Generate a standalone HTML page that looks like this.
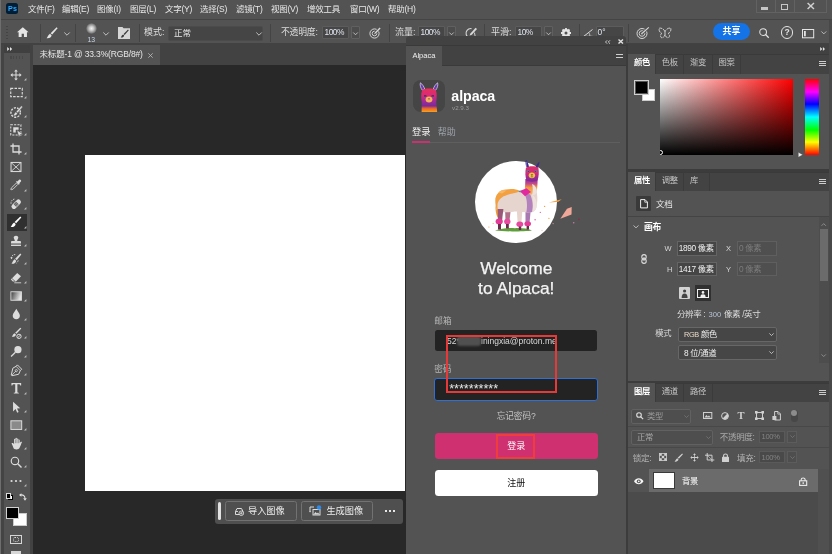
<!DOCTYPE html>
<html lang="zh-CN">
<head>
<meta charset="utf-8">
<title>Photoshop - Alpaca</title>
<style>
*{box-sizing:border-box;margin:0;padding:0}
html,body{width:832px;height:554px;overflow:hidden;background:#535353;}
body{position:relative;font-family:"Liberation Sans","Noto Sans CJK SC",sans-serif;font-size:9px;color:#dddddd;line-height:1;}
#wrap{position:absolute;left:0;top:0;width:832px;height:554px;will-change:transform;}
.a{position:absolute;}
.t{position:absolute;white-space:nowrap;}
svg{position:absolute;overflow:visible}
/* menu */
#menubar{left:0;top:0;width:832px;height:19px;background:#535353;}
#menubar .m{top:4.5px;font-size:8.5px;color:#e8e8e8;letter-spacing:-0.25px}
#optbar{left:0;top:19px;width:832px;height:26px;background:#535353;border-top:1px solid #444;}

.sep{top:4px;width:1px;height:18px;background:#444444;}
.dd{background:#464646;border:1px solid #676767;border-radius:2px;}
.ib{background:#464646;border:1px solid #5c5c5c;border-radius:1px;}
.db{background:#4c4c4c;border:1px solid #606060;border-radius:1px;}
.tbtn{border:1px solid #727272;border-radius:2.5px;background:#4f4f4f;}
/* doc area */
#docstrip{left:0;top:43.3px;width:832px;height:21.7px;background:#424242;}
#canvas{left:33px;top:65px;width:372.75px;height:489px;background:#282828;}
#toolbar{left:0;top:45px;width:30px;height:509px;background:#535353;}
#tbgap{left:30px;top:44px;width:3px;height:510px;background:#424242;}
#alpaca{left:405.75px;top:36.3px;width:220.5px;height:518px;background:#535353;border-radius:3px 3px 0 0;overflow:hidden;}
#right{left:627.75px;top:44px;width:204.25px;height:510px;background:#535353;overflow:hidden;}
#rgap{left:626.25px;top:44px;width:1.5px;height:510px;background:#3c3c3c;}
</style>
</head>
<body>
<div id="wrap">
<div class="a" style="left:0;top:0;width:1px;height:554px;background:#6e6e6e;z-index:5"></div>
<div class="a" style="left:829.4px;top:19.5px;width:2.6px;height:535px;background:#484848;z-index:5"></div>
<!-- MENU BAR -->
<div id="menubar" class="a">
<div class="a" style="left:6px;top:3px;width:12px;height:11px;background:#001e36;border-radius:2.5px;"></div>
<div class="t" style="left:8px;top:4.5px;font-size:7.2px;font-weight:bold;color:#31a8ff;letter-spacing:0.3px;">Ps</div>
<div class="t m" style="left:28px">文件(F)</div>
<div class="t m" style="left:62px">编辑(E)</div>
<div class="t m" style="left:97px">图像(I)</div>
<div class="t m" style="left:130px">图层(L)</div>
<div class="t m" style="left:165px">文字(Y)</div>
<div class="t m" style="left:200px">选择(S)</div>
<div class="t m" style="left:236px">滤镜(T)</div>
<div class="t m" style="left:271px">视图(V)</div>
<div class="t m" style="left:307px">增效工具</div>
<div class="t m" style="left:350px">窗口(W)</div>
<div class="t m" style="left:388px">帮助(H)</div>
<!-- window controls -->
<div class="a" style="left:755.8px;top:-1px;width:71.7px;height:14px;border:1px solid #626262;border-top:none;"></div>
<div class="a" style="left:774.8px;top:0;width:1px;height:12.5px;background:#626262;"></div>
<div class="a" style="left:793.9px;top:0;width:1px;height:12.5px;background:#626262;"></div>
<div class="a" style="left:761.2px;top:7.2px;width:7px;height:2.4px;background:#c6c6c6;"></div>
<div class="a" style="left:781.2px;top:4.1px;width:6.8px;height:5.6px;border:1.5px solid #c6c6c6;"></div>
<svg style="left:807.2px;top:3.2px" width="7.6" height="6" viewBox="0 0 7.6 6"><path d="M0.6 0 L7 6 M7 0 L0.6 6" stroke="#d0d0d0" stroke-width="1.5" fill="none"/></svg>
</div>
<!-- OPTIONS BAR -->
<div id="optbar" class="a">
<!-- coordinates relative to optbar top=19 -->
<div class="a" style="left:6px;top:6px;width:1.5px;height:15px;background:repeating-linear-gradient(#444 0 1.5px,transparent 1.5px 3px);"></div>
<svg style="left:17px;top:7.3px" width="11.6" height="10.2" viewBox="0 0 12 10"><path d="M6 0 L12 5.2 L10.3 5.2 L10.3 10 L7.2 10 L7.2 6.6 L4.8 6.6 L4.8 10 L1.7 10 L1.7 5.2 L0 5.2 Z" fill="#e4e4e4"/></svg>
<div class="a sep" style="left:40px"></div>
<svg style="left:46px;top:7px" width="12" height="12" viewBox="0 0 12 12"><path d="M10.6 0.3 L11.6 1.2 L6.2 7.6 L4.6 6.2 Z" fill="#e4e4e4"/><path d="M4 6.8 L5.6 8.2 C5.4 10.2 3.4 11.6 0.6 11.2 C1.8 10.4 1.6 8.2 4 6.8 Z" fill="#e4e4e4"/></svg>
<svg style="left:64px;top:12px" width="6" height="4" viewBox="0 0 6 4"><path d="M0.3 0.5 L3 3.2 L5.7 0.5" stroke="#cfcfcf" stroke-width="0.9" fill="none"/></svg>
<div class="a sep" style="left:75px"></div>
<div class="a" style="left:85.5px;top:3px;width:11px;height:11px;border-radius:50%;background:radial-gradient(circle,#f0f0f0 0%,#cfcfcf 25%,#8a8a8a 55%,#535353 72%);"></div>
<div class="t" style="left:87.6px;top:16.6px;font-size:6.8px;color:#c8d4e8;">13</div>
<svg style="left:103px;top:12px" width="6" height="4" viewBox="0 0 6 4"><path d="M0.3 0.5 L3 3.2 L5.7 0.5" stroke="#cfcfcf" stroke-width="0.9" fill="none"/></svg>
<svg style="left:118px;top:7px" width="12" height="12" viewBox="0 0 12 12"><path d="M0 0 L4.5 0 L5.5 1.2 L12 1.2 L12 12 L0 12 Z" fill="#d6d6d6"/><path d="M10 2.6 L10.8 3.3 L6.6 8 L5.6 7.1 Z" fill="#3a3a3a"/><path d="M5.1 7.5 L6.2 8.5 C6 9.9 4.6 10.8 2.6 10.5 C3.5 9.9 3.4 8.4 5.1 7.5 Z" fill="#3a3a3a"/></svg>
<div class="a sep" style="left:138.5px"></div>
<div class="t" style="left:144px;top:8px;font-size:9px;color:#dcdcdc;">模式:</div>
<div class="a" style="left:167.6px;top:5.7px;width:95.4px;height:15.2px;background:#454545;border:1px solid #4b4b4b;border-radius:2px;"></div>
<div class="t" style="left:174px;top:9px;font-size:8.5px;color:#e8e8e8;">正常</div>
<svg style="left:256px;top:12px" width="6" height="4" viewBox="0 0 6 4"><path d="M0.3 0.5 L3 3.2 L5.7 0.5" stroke="#cfcfcf" stroke-width="0.9" fill="none"/></svg>
<div class="a sep" style="left:270px"></div>
<div class="t" style="left:281px;top:8px;font-size:8.8px;letter-spacing:-0.2px;color:#dcdcdc;">不透明度:</div>
<div class="a ib" style="left:322.3px;top:5.7px;width:26.7px;height:13px;"></div>
<div class="t" style="left:324.5px;top:7.9px;font-size:8.4px;color:#dfe4ee;letter-spacing:-0.5px">100%</div>
<div class="a db" style="left:350.6px;top:5.7px;width:9.8px;height:13px;"></div>
<svg style="left:352.5px;top:11.5px" width="5" height="3.5" viewBox="0 0 6 4"><path d="M0.3 0.5 L3 3.2 L5.7 0.5" stroke="#cfcfcf" stroke-width="1" fill="none"/></svg>
<svg style="left:369px;top:7px" width="12" height="12" viewBox="0 0 12 12"><circle cx="5.5" cy="6.5" r="4.6" stroke="#d8d8d8" stroke-width="1" fill="none"/><circle cx="5.5" cy="6.5" r="2.3" stroke="#d8d8d8" stroke-width="0.9" fill="none"/><path d="M5 7.2 L11 0.8" stroke="#535353" stroke-width="2.6"/><path d="M5 7.2 L6 5.2 L10.6 0.6 L11.6 1.6 L7 6.2 Z" fill="#d8d8d8"/></svg>
<div class="a sep" style="left:388.5px"></div>
<div class="t" style="left:395px;top:8px;font-size:9px;color:#dcdcdc;">流量:</div>
<div class="a ib" style="left:418.3px;top:5.7px;width:26.7px;height:13px;"></div>
<div class="t" style="left:420.5px;top:7.9px;font-size:8.4px;color:#dfe4ee;letter-spacing:-0.5px">100%</div>
<div class="a db" style="left:446.6px;top:5.7px;width:9.8px;height:13px;"></div>
<svg style="left:448.5px;top:11.5px" width="5" height="3.5" viewBox="0 0 6 4"><path d="M0.3 0.5 L3 3.2 L5.7 0.5" stroke="#cfcfcf" stroke-width="1" fill="none"/></svg>
<svg style="left:465px;top:7px" width="13" height="12" viewBox="0 0 13 12"><path d="M6.5 1.6 C2.5 1.2 0.4 4.6 1.2 7.6 C1.8 9.6 3.6 10.8 5.4 10.6" stroke="#d8d8d8" stroke-width="1.1" fill="none"/><path d="M4.6 8.6 L5.4 6.6 L10.6 0.8 L12 2 L6.8 7.8 Z" fill="#d8d8d8"/><path d="M9.4 5.6 L10.4 10.4" stroke="#d8d8d8" stroke-width="0.9"/></svg>
<div class="a sep" style="left:484px"></div>
<div class="t" style="left:491px;top:8px;font-size:9px;color:#dcdcdc;">平滑:</div>
<div class="a ib" style="left:515.3px;top:5.7px;width:26.7px;height:13px;"></div>
<div class="t" style="left:517.5px;top:7.9px;font-size:8.4px;color:#dfe4ee;letter-spacing:-0.5px">10%</div>
<div class="a db" style="left:543.6px;top:5.7px;width:9.8px;height:13px;"></div>
<svg style="left:545.5px;top:11.5px" width="5" height="3.5" viewBox="0 0 6 4"><path d="M0.3 0.5 L3 3.2 L5.7 0.5" stroke="#cfcfcf" stroke-width="1" fill="none"/></svg>
<svg style="left:561px;top:8px" width="10" height="10" viewBox="0 0 10 10"><circle cx="5" cy="5" r="3" fill="none" stroke="#e4e4e4" stroke-width="2"/><g stroke="#e4e4e4" stroke-width="1.8"><path d="M5 0 V10 M0 5 H10 M1.5 1.5 L8.5 8.5 M8.5 1.5 L1.5 8.5"/></g><circle cx="5" cy="5" r="1.5" fill="#535353"/></svg>
<div class="a sep" style="left:578.5px"></div>
<svg style="left:583px;top:9px" width="10" height="8" viewBox="0 0 10 8"><path d="M9.5 0.5 L0.8 7.3 L9.5 7.3" stroke="#d8d8d8" stroke-width="1" fill="none"/><path d="M5.6 3.6 C6.6 4.6 6.9 5.8 6.8 7.3" stroke="#d8d8d8" stroke-width="0.8" fill="none"/></svg>
<div class="a ib" style="left:595.7px;top:5.7px;width:28.3px;height:13px;"></div>
<div class="a sep" style="left:628px"></div>
<div class="t" style="left:597.5px;top:7.9px;font-size:8.4px;color:#dfe4ee;">0°</div>
<!-- right side -->
<svg style="left:636px;top:7px" width="14" height="12" viewBox="0 0 14 12"><circle cx="6" cy="6.5" r="5" stroke="#d8d8d8" stroke-width="1" fill="none"/><circle cx="6" cy="6.5" r="2.8" stroke="#d8d8d8" stroke-width="0.9" fill="none"/><circle cx="6" cy="6.5" r="0.9" fill="#d8d8d8"/><path d="M6 6.5 L12.6 0.6" stroke="#535353" stroke-width="2.8"/><path d="M6 6.5 L12.8 0.4" stroke="#d8d8d8" stroke-width="1.1"/></svg>
<svg style="left:658px;top:7px" width="14" height="13" viewBox="0 0 14 13"><path d="M7 4.6 C6 2.2 3.4 0.6 1.2 1.2 C0.6 3.6 2 5.8 3.8 6.4 C2.2 7.4 2 9.6 3.6 10.8 C5.4 10.8 6.6 9.4 7 7.8 C7.4 9.4 8.6 10.8 10.4 10.8 C12 9.6 11.8 7.4 10.2 6.4 C12 5.8 13.4 3.6 12.8 1.2 C10.6 0.6 8 2.2 7 4.6 Z" stroke="#d8d8d8" stroke-width="0.9" fill="none" stroke-dasharray="3.2 0.8"/><path d="M7 4.4 V8.4" stroke="#d8d8d8" stroke-width="0.9"/></svg>
<div class="a" style="left:713px;top:3.4px;width:37.3px;height:17px;border-radius:9px;background:#1473e6;"></div>
<div class="t" style="left:722.5px;top:7.4px;font-size:9px;font-weight:bold;color:#ffffff;">共享</div>
<svg style="left:759px;top:7.6px" width="10.3" height="10.3" viewBox="0 0 11 11"><circle cx="4.4" cy="4.4" r="3.6" stroke="#e4e4e4" stroke-width="1.1" fill="none"/><path d="M7 7 L10.4 10.4" stroke="#e4e4e4" stroke-width="1.3"/></svg>
<div class="a" style="left:780.7px;top:6.4px;width:12.4px;height:12.4px;border-radius:50%;border:1.1px solid #e4e4e4;"></div>
<div class="t" style="left:784.5px;top:8.4px;font-size:8.5px;font-weight:bold;color:#e4e4e4;">?</div>
<svg style="left:802px;top:8.6px" width="12.2" height="9.3" viewBox="0 0 12.2 9.3"><rect x="0.5" y="0.5" width="11.2" height="8.3" stroke="#e4e4e4" stroke-width="1" fill="none"/><rect x="2" y="2" width="1.8" height="5.3" fill="#e4e4e4"/></svg>
<svg style="left:820.7px;top:11.4px" width="5.6" height="3.6" viewBox="0 0 6 4"><path d="M0.3 0.5 L3 3.2 L5.7 0.5" stroke="#cfcfcf" stroke-width="0.9" fill="none"/></svg>
</div>
<!-- DOC STRIP -->
<div id="docstrip" class="a">
<div class="a" style="left:32.8px;top:1.3px;width:127.7px;height:20.6px;background:#535353;"></div>
<div class="t" style="left:39.5px;top:7.2px;font-size:8.5px;color:#e6e6e6;letter-spacing:-0.15px;">未标题-1 @ 33.3%(RGB/8#)</div>
<svg style="left:148px;top:9.7px" width="5" height="5" viewBox="0 0 5 5"><path d="M0.3 0.3 L4.7 4.7 M4.7 0.3 L0.3 4.7" stroke="#bdbdbd" stroke-width="0.8"/></svg>
</div>
<!-- CANVAS -->
<div id="canvas" class="a">
<div class="a" style="left:52px;top:90px;width:320.2px;height:336.2px;background:#ffffff;"></div>
<div class="a" style="left:182px;top:433.7px;width:188px;height:25px;background:#4f4f4f;border-radius:3px;"></div>
<div class="a" style="left:184.6px;top:437px;width:3.2px;height:18.2px;background:#e2e2e2;border-radius:1.6px;"></div>
<div class="a tbtn" style="left:192.2px;top:436.3px;width:71.6px;height:19.6px;"></div>
<div class="a tbtn" style="left:268.2px;top:436.3px;width:71.6px;height:19.6px;"></div>
<svg style="left:200.5px;top:441.5px" width="10.5" height="9" viewBox="0 0 21 18"><path d="M3 9 L6 3 H15 L18 9 V15 H3 Z" fill="none" stroke="#dcdcdc" stroke-width="2"/><circle cx="14.5" cy="12.5" r="4.5" fill="#4f4f4f" stroke="#dcdcdc" stroke-width="1.8"/><path d="M14.5 10 V15 M12 12.5 H17" stroke="#dcdcdc" stroke-width="1.6"/><path d="M3 9 H8" stroke="#dcdcdc" stroke-width="1.8"/></svg>
<div class="t" style="left:215px;top:441.5px;font-size:9.2px;color:#ececec;">导入图像</div>
<svg style="left:275.5px;top:440px" width="12.5" height="11" viewBox="0 0 25 22"><path d="M2 12 V4 H10" fill="none" stroke="#dcdcdc" stroke-width="2"/><path d="M4 12 L1.8 15 L-0.2 12 Z" fill="#dcdcdc" transform="translate(0.2 0)"/><rect x="8" y="9" width="14" height="11" fill="none" stroke="#dcdcdc" stroke-width="2"/><path d="M9 19 L13 14 L16 17 L18 15 L21 19 Z" fill="#dcdcdc"/><circle cx="20" cy="5" r="4.4" fill="#2d8ceb"/></svg>
<div class="t" style="left:293.4px;top:441.5px;font-size:9.2px;color:#ececec;">生成图像</div>
<div class="a" style="left:351.5px;top:445px;width:2px;height:2px;background:#e6e6e6;"></div>
<div class="a" style="left:355.5px;top:445px;width:2px;height:2px;background:#e6e6e6;"></div>
<div class="a" style="left:359.5px;top:445px;width:2px;height:2px;background:#e6e6e6;"></div>
</div>
<!-- TOOLBAR -->
<div id="toolbar" class="a">
<div class="a" style="left:0;top:0;width:3.5px;height:509px;background:#444;"></div>
<div class="a" style="left:3.5px;top:0;width:26.5px;height:8.3px;background:#404040;"></div>
<svg style="left:6.7px;top:2.2px" width="5.6" height="4" viewBox="0 0 5.6 4"><path d="M0.2 0 L2.4 2 L0.2 4 Z M3 0 L5.2 2 L3 4 Z" fill="#e4e4e4"/></svg>
<div class="a" style="left:10px;top:11px;width:13px;height:2.5px;background:repeating-linear-gradient(90deg,#484848 0 1.5px,transparent 1.5px 3px);"></div>
<svg style="left:10.3px;top:23.7px" width="12" height="12" viewBox="0 0 14 14"><path d="M7 0.5 L9.2 3 H7.6 V6.4 H11 V4.8 L13.5 7 L11 9.2 V7.6 H7.6 V11 H9.2 L7 13.5 L4.8 11 H6.4 V7.6 H3 V9.2 L0.5 7 L3 4.8 V6.4 H6.4 V3 H4.8 Z" fill="#dcdcdc"/></svg>
<svg style="left:23.5px;top:32.9px" width="2.4" height="2.4" viewBox="0 0 3 3"><path d="M3 0 V3 H0 Z" fill="#bdbdbd"/></svg>
<svg style="left:9.8px;top:40.5px" width="13" height="13" viewBox="0 0 14 14"><rect x="0.8" y="2.6" width="12.4" height="8.8" fill="none" stroke="#dcdcdc" stroke-width="1.2" stroke-dasharray="2.7 1.35"/></svg>
<svg style="left:23.5px;top:51.4px" width="2.4" height="2.4" viewBox="0 0 3 3"><path d="M3 0 V3 H0 Z" fill="#bdbdbd"/></svg>
<svg style="left:9.7px;top:60.0px" width="13.2" height="13.2" viewBox="0 0 14 14"><circle cx="6" cy="8" r="5" fill="none" stroke="#dcdcdc" stroke-width="1.5" stroke-dasharray="2.2 1.3"/><path d="M12.2 0.8 L13.4 2 L8.2 8.4 L6.6 7 Z" fill="#dcdcdc" stroke="#535353" stroke-width="0.5"/><path d="M6.2 7.4 L7.8 8.8 C7.6 10.8 5.6 11.8 3.2 11.2 C4.4 10.6 4.2 8.6 6.2 7.4 Z" fill="#dcdcdc" stroke="#535353" stroke-width="0.4"/></svg>
<svg style="left:23.5px;top:69.8px" width="2.4" height="2.4" viewBox="0 0 3 3"><path d="M3 0 V3 H0 Z" fill="#bdbdbd"/></svg>
<svg style="left:10.0px;top:78.8px" width="13.4" height="13.4" viewBox="0 0 14 14"><rect x="0.8" y="0.8" width="10.6" height="10.6" fill="none" stroke="#dcdcdc" stroke-width="1.1" stroke-dasharray="2.2 1.3"/><path d="M3.4 3.4 H9 V6 H6 V9 H3.4 Z" fill="#dcdcdc"/><path d="M7.2 6.4 L13.6 10.6 L10.6 11 L9.4 13.8 Z" fill="#dcdcdc" stroke="#535353" stroke-width="0.5"/></svg>
<svg style="left:23.5px;top:88.3px" width="2.4" height="2.4" viewBox="0 0 3 3"><path d="M3 0 V3 H0 Z" fill="#bdbdbd"/></svg>
<svg style="left:10.3px;top:97.5px" width="12" height="12" viewBox="0 0 14 14"><path d="M3.5 0.5 V10.5 H13.5 M0.5 3.5 H10.5 V13.5" fill="none" stroke="#dcdcdc" stroke-width="1.5"/></svg>
<svg style="left:23.5px;top:106.7px" width="2.4" height="2.4" viewBox="0 0 3 3"><path d="M3 0 V3 H0 Z" fill="#bdbdbd"/></svg>
<svg style="left:10.3px;top:115.9px" width="12" height="12" viewBox="0 0 14 14"><rect x="1.2" y="1.7" width="11.6" height="10.6" fill="none" stroke="#dcdcdc" stroke-width="1.2"/><path d="M1.2 1.7 L12.8 12.3 M12.8 1.7 L1.2 12.3" stroke="#dcdcdc" stroke-width="1"/></svg>
<svg style="left:10.3px;top:134.4px" width="12" height="12" viewBox="0 0 14 14"><path d="M10.6 0.8 C11.8 -0.2 13.8 1.6 12.8 3 L10.8 5 L11.4 5.6 L10.4 6.6 L7 3.2 L8 2.2 L8.6 2.8 Z" fill="#dcdcdc"/><path d="M7.6 4.6 L9.2 6.2 L3.6 11.8 L1.4 12.6 L0.9 12.1 L1.8 10.2 Z" fill="none" stroke="#dcdcdc" stroke-width="1"/></svg>
<svg style="left:23.5px;top:143.6px" width="2.4" height="2.4" viewBox="0 0 3 3"><path d="M3 0 V3 H0 Z" fill="#bdbdbd"/></svg>
<svg style="left:10.1px;top:152.7px" width="12.4" height="12.4" viewBox="0 0 14 14"><g transform="rotate(-45 7 7)"><rect x="0.6" y="4.2" width="12.8" height="5.6" rx="2.8" fill="#dcdcdc"/><rect x="5" y="5" width="4" height="4" fill="#535353"/><circle cx="6.2" cy="6.2" r="0.5" fill="#dcdcdc"/><circle cx="7.8" cy="6.2" r="0.5" fill="#dcdcdc"/><circle cx="6.2" cy="7.8" r="0.5" fill="#dcdcdc"/><circle cx="7.8" cy="7.8" r="0.5" fill="#dcdcdc"/></g><path d="M1.2 6.5 C0.6 3.5 3 1 6 1.2" fill="none" stroke="#dcdcdc" stroke-width="1" stroke-dasharray="1.6 1.2"/></svg>
<svg style="left:23.5px;top:162.1px" width="2.4" height="2.4" viewBox="0 0 3 3"><path d="M3 0 V3 H0 Z" fill="#bdbdbd"/></svg>
<div class="a" style="left:6.5px;top:169.2px;width:20.5px;height:16.4px;background:#303030;"></div>
<svg style="left:10.3px;top:171.3px" width="12" height="12" viewBox="0 0 14 14"><path d="M12 0.6 L13.2 1.8 L7.2 8.6 L5.4 7 Z" fill="#ffffff"/><path d="M4.8 7.6 L6.6 9.2 C6.4 11.6 4 13.2 0.8 12.8 C2.2 11.8 2 9.2 4.8 7.6 Z" fill="#ffffff"/></svg>
<svg style="left:23.5px;top:180.5px" width="2.4" height="2.4" viewBox="0 0 3 3"><path d="M3 0 V3 H0 Z" fill="#bdbdbd"/></svg>
<svg style="left:10.3px;top:189.8px" width="12" height="12" viewBox="0 0 14 14"><path d="M7 0.8 C9 0.8 10 2.2 9.6 3.6 C9.2 5 8.4 5.6 8.4 7 H11.6 C12.4 7 12.8 7.6 12.8 8.4 V10 H1.2 V8.4 C1.2 7.6 1.6 7 2.4 7 H5.6 C5.6 5.6 4.8 5 4.4 3.6 C4 2.2 5 0.8 7 0.8 Z" fill="#dcdcdc"/><rect x="1.2" y="11.2" width="11.6" height="1.6" fill="#dcdcdc"/></svg>
<svg style="left:23.5px;top:198.9px" width="2.4" height="2.4" viewBox="0 0 3 3"><path d="M3 0 V3 H0 Z" fill="#bdbdbd"/></svg>
<svg style="left:10.3px;top:208.2px" width="12" height="12" viewBox="0 0 14 14"><path d="M12 0.6 L13.2 1.8 L7.8 8.4 L6 6.8 Z" fill="#dcdcdc"/><path d="M5.4 7.4 L7.2 9 C7 11.4 4.8 13 1.8 12.6 C3 11.6 2.8 9 5.4 7.4 Z" fill="#dcdcdc"/><path d="M1.6 6.2 C1.4 3.6 3.4 1.6 6.2 1.8 M9.6 8.6 C9.2 10.2 8.6 11 7.6 11.8" fill="none" stroke="#dcdcdc" stroke-width="1" stroke-dasharray="1.6 1.1"/><path d="M0.4 5 L1.6 7.2 L3.2 5.2 Z" fill="#dcdcdc"/></svg>
<svg style="left:23.5px;top:217.4px" width="2.4" height="2.4" viewBox="0 0 3 3"><path d="M3 0 V3 H0 Z" fill="#bdbdbd"/></svg>
<svg style="left:10.3px;top:226.6px" width="12" height="12" viewBox="0 0 14 14"><path d="M8.4 1.2 L12.8 5 L7 11 H3.4 L1 8.8 Z" fill="#dcdcdc"/><path d="M2.2 7.6 L6 11" stroke="#535353" stroke-width="0.9"/><path d="M5 12.6 H13" stroke="#dcdcdc" stroke-width="1"/></svg>
<svg style="left:23.5px;top:235.8px" width="2.4" height="2.4" viewBox="0 0 3 3"><path d="M3 0 V3 H0 Z" fill="#bdbdbd"/></svg>
<svg style="left:10.1px;top:244.9px" width="12.4" height="12.4" viewBox="0 0 14 14"><defs><linearGradient id="gg" x1="0" y1="0" x2="1" y2="0.3"><stop offset="0" stop-color="#3a3a3a"/><stop offset="1" stop-color="#e6e6e6"/></linearGradient></defs><rect x="1" y="2" width="12" height="9.6" fill="url(#gg)" stroke="#dcdcdc" stroke-width="1"/></svg>
<svg style="left:23.5px;top:254.3px" width="2.4" height="2.4" viewBox="0 0 3 3"><path d="M3 0 V3 H0 Z" fill="#bdbdbd"/></svg>
<svg style="left:10.0px;top:263.2px" width="12.6" height="12.6" viewBox="0 0 14 14"><path d="M7 0.8 C8.6 4 11 5.8 11 8.6 C11 11 9.2 12.6 7 12.6 C4.8 12.6 3 11 3 8.6 C3 5.8 5.4 4 7 0.8 Z" fill="#dcdcdc"/></svg>
<svg style="left:23.5px;top:272.8px" width="2.4" height="2.4" viewBox="0 0 3 3"><path d="M3 0 V3 H0 Z" fill="#bdbdbd"/></svg>
<svg style="left:10.0px;top:281.7px" width="12.6" height="12.6" viewBox="0 0 14 14"><path d="M11.4 0.8 L12.6 1.8 L7.2 7.6 L5.8 6.4 Z" fill="#dcdcdc"/><path d="M5.2 7 L6.6 8.2 C6.4 10 4.6 11.2 2 10.8 C3 10 3 8 5.2 7 Z" fill="#dcdcdc"/><circle cx="10" cy="10.4" r="2.4" fill="none" stroke="#dcdcdc" stroke-width="1.1"/><path d="M8.4 12 L11.8 8.8" stroke="#dcdcdc" stroke-width="1"/></svg>
<svg style="left:23.5px;top:291.2px" width="2.4" height="2.4" viewBox="0 0 3 3"><path d="M3 0 V3 H0 Z" fill="#bdbdbd"/></svg>
<svg style="left:10.0px;top:300.1px" width="12.6" height="12.6" viewBox="0 0 14 14"><circle cx="8.8" cy="5.2" r="4" fill="#dcdcdc"/><path d="M6 8 L1.2 12.8" stroke="#dcdcdc" stroke-width="1.4"/></svg>
<svg style="left:23.5px;top:309.6px" width="2.4" height="2.4" viewBox="0 0 3 3"><path d="M3 0 V3 H0 Z" fill="#bdbdbd"/></svg>
<svg style="left:10.0px;top:318.6px" width="12.6" height="12.6" viewBox="0 0 14 14"><path d="M8.2 1 L13 5.8 L11.4 7.4 L9.6 11.4 L2.2 13 L1.4 12.2 L3.2 4.6 L6.8 2.6 Z" fill="none" stroke="#dcdcdc" stroke-width="1.1"/><path d="M1.8 12.6 L6.4 8" stroke="#dcdcdc" stroke-width="0.9"/><circle cx="7" cy="7.4" r="1.2" fill="none" stroke="#dcdcdc" stroke-width="0.9"/><path d="M6.8 2.6 L11.4 7.4" stroke="#dcdcdc" stroke-width="0.9"/></svg>
<svg style="left:23.5px;top:328.1px" width="2.4" height="2.4" viewBox="0 0 3 3"><path d="M3 0 V3 H0 Z" fill="#bdbdbd"/></svg>
<svg style="left:10.0px;top:337.0px" width="12.6" height="12.6" viewBox="0 0 14 14"><path d="M1.6 1.2 H12.4 V4 H11.4 C11.2 2.8 10.8 2.4 9.6 2.4 H8.2 V10.8 C8.2 11.6 8.6 11.8 9.8 11.9 V12.8 H4.2 V11.9 C5.4 11.8 5.8 11.6 5.8 10.8 V2.4 H4.4 C3.2 2.4 2.8 2.8 2.6 4 H1.6 Z" fill="#dcdcdc"/></svg>
<svg style="left:23.5px;top:346.5px" width="2.4" height="2.4" viewBox="0 0 3 3"><path d="M3 0 V3 H0 Z" fill="#bdbdbd"/></svg>
<svg style="left:10.0px;top:355.5px" width="12.6" height="12.6" viewBox="0 0 14 14"><path d="M3.4 0.8 L11.4 8 L7.8 8.2 L9.6 12.2 L8 13 L6.2 9 L3.4 11.6 Z" fill="#dcdcdc"/></svg>
<svg style="left:23.5px;top:365.0px" width="2.4" height="2.4" viewBox="0 0 3 3"><path d="M3 0 V3 H0 Z" fill="#bdbdbd"/></svg>
<svg style="left:10.0px;top:373.9px" width="12.6" height="12.6" viewBox="0 0 14 14"><rect x="1" y="2" width="12" height="9.6" fill="#8a8a8a" stroke="#dcdcdc" stroke-width="1.1"/></svg>
<svg style="left:23.5px;top:383.4px" width="2.4" height="2.4" viewBox="0 0 3 3"><path d="M3 0 V3 H0 Z" fill="#bdbdbd"/></svg>
<svg style="left:9.5px;top:391.9px" width="13.6" height="13.6" viewBox="0 0 14 14"><path d="M4.2 7.4 V2.6 C4.2 1.6 5.6 1.6 5.6 2.6 V1.6 C5.6 0.6 7.1 0.6 7.1 1.6 V2.2 C7.1 1.2 8.6 1.2 8.6 2.2 V3.2 C8.6 2.4 10 2.4 10 3.4 V6.4 C10.4 5.4 11.6 4.6 12.4 5.2 C11.4 7 11.2 9 10 10.8 C9.2 12.2 8.2 12.8 6.8 12.8 C5 12.8 3.6 12 3.2 10.2 C2.8 8.8 2.2 7.8 1.6 6.6 C2.4 5.8 3.6 6.4 4.2 7.4 Z" fill="#dcdcdc"/><path d="M5.6 2.6 V6.4 M7.1 2 V6.4 M8.6 3 V6.4" stroke="#535353" stroke-width="0.5"/></svg>
<svg style="left:23.5px;top:401.9px" width="2.4" height="2.4" viewBox="0 0 3 3"><path d="M3 0 V3 H0 Z" fill="#bdbdbd"/></svg>
<svg style="left:10.1px;top:410.9px" width="12.4" height="12.4" viewBox="0 0 14 14"><circle cx="5.6" cy="5.6" r="4.2" fill="none" stroke="#dcdcdc" stroke-width="1.3"/><path d="M8.8 8.8 L13 13" stroke="#dcdcdc" stroke-width="1.6"/></svg>
<svg style="left:23.5px;top:420.3px" width="2.4" height="2.4" viewBox="0 0 3 3"><path d="M3 0 V3 H0 Z" fill="#bdbdbd"/></svg>
<svg style="left:10.3px;top:429.6px" width="12" height="12" viewBox="0 0 14 14"><circle cx="1.8" cy="7" r="1.3" fill="#dcdcdc"/><circle cx="7" cy="7" r="1.3" fill="#dcdcdc"/><circle cx="12.2" cy="7" r="1.3" fill="#dcdcdc"/></svg>
<svg style="left:23.5px;top:438.8px" width="2.4" height="2.4" viewBox="0 0 3 3"><path d="M3 0 V3 H0 Z" fill="#bdbdbd"/></svg>
<div class="a" style="left:7.5px;top:450px;width:5px;height:5px;background:#fff;border:0.5px solid #000"></div><div class="a" style="left:5.5px;top:448px;width:5.5px;height:5.5px;background:#000;border:0.7px solid #ddd"></div>
<svg style="left:19px;top:448px" width="8" height="8" viewBox="0 0 8 8"><path d="M1.4 2 C4 1.4 6 2.6 6 5.4" stroke="#e0e0e0" stroke-width="1.1" fill="none"/><path d="M0 2 L2.4 0.2 V3.8 Z M6 7.8 L4.2 5.2 H7.8 Z" fill="#e0e0e0"/></svg>
<div class="a" style="left:13px;top:467.8px;width:13.7px;height:13.2px;background:#fff;border:0.5px solid #ccc"></div>
<div class="a" style="left:5.8px;top:461.5px;width:13.2px;height:12.8px;background:#000;border:1px solid #d0d0d0"></div>
<div class="a" style="left:10px;top:489.5px;width:12.3px;height:9.6px;border:1px solid #d6d6d6;"></div><div class="a" style="left:13px;top:492px;width:6.3px;height:4.6px;border:1px dotted #d6d6d6;border-radius:2px"></div>
<div class="a" style="left:11px;top:506px;width:10px;height:3px;background:#d6d6d6;"></div>
</div>
<div id="tbgap" class="a"></div>
<!-- RIGHT PANELS -->
<div id="right" class="a">
<div class="a" style="left:0;top:0;width:205px;height:9.5px;background:#414141;"></div>
<svg style="left:192.25px;top:3px" width="5.4" height="4" viewBox="0 0 5.6 4"><path d="M0.2 0 L2.4 2 L0.2 4 Z M3 0 L5.2 2 L3 4 Z" fill="#e4e4e4"/></svg>
<div class="a" style="left:0;top:9.5px;width:205px;height:20px;background:#434343;border-top:1px solid #3a3a3a;"></div><div class="a" style="left:0;top:9.5px;width:27.5px;height:21px;background:#535353;"></div><div class="t" style="left:6.25px;top:13.9px;font-size:8.3px;color:#ffffff;font-weight:bold;letter-spacing:-0.2px">颜色</div><div class="a" style="left:27.0px;top:9.5px;width:1px;height:20px;background:#3b3b3b;"></div><div class="t" style="left:34.0px;top:13.9px;font-size:8.3px;color:#c4c4c4;letter-spacing:-0.3px">色板</div><div class="a" style="left:55.25px;top:9.5px;width:1px;height:20px;background:#3b3b3b;"></div><div class="t" style="left:62.25px;top:13.9px;font-size:8.3px;color:#c4c4c4;letter-spacing:-0.3px">渐变</div><div class="a" style="left:83.75px;top:9.5px;width:1px;height:20px;background:#3b3b3b;"></div><div class="t" style="left:90.75px;top:13.9px;font-size:8.3px;color:#c4c4c4;letter-spacing:-0.3px">图案</div><div class="a" style="left:112.5px;top:9.5px;width:1px;height:20px;background:#3b3b3b;"></div><div class="a" style="left:191.55px;top:17.2px;width:6.8px;height:1px;background:#cdcdcd;"></div><div class="a" style="left:191.55px;top:19.1px;width:6.8px;height:1px;background:#cdcdcd;"></div><div class="a" style="left:191.55px;top:21.0px;width:6.8px;height:1px;background:#cdcdcd;"></div>
<div class="a" style="left:13.75px;top:44.5px;width:13.5px;height:12.5px;background:#ffffff;border:0.5px solid #ccc;"></div>
<div class="a" style="left:5.75px;top:36px;width:15px;height:15px;background:#000;border:1px solid #d0d0d0;box-shadow:inset 0 0 0 1px #555;"></div>
<div class="a" style="left:32.0px;top:34.5px;width:133px;height:76px;background:linear-gradient(to bottom,rgba(0,0,0,0),#000),linear-gradient(to right,#fff,#ff0000);"></div>
<div class="a" style="left:176.75px;top:34.5px;width:14px;height:76px;background:linear-gradient(to bottom,#ff0000 0%,#ff00ff 17%,#0000ff 33%,#00ffff 50%,#00ff00 67%,#ffff00 83%,#ff0000 100%);"></div>
<div class="a" style="left:32.0px;top:105px;width:5px;height:5.5px;overflow:hidden;"><div class="a" style="left:-1.6px;top:1.2px;width:5.2px;height:5.2px;border-radius:50%;border:0.8px solid #fff;"></div></div>
<svg style="left:170.25px;top:107.5px" width="5" height="5.5" viewBox="0 0 5 5.5"><path d="M0.3 0.3 L4.8 2.75 L0.3 5.2 Z" fill="#f0f0f0" stroke="#333" stroke-width="0.3"/></svg>
<div class="a" style="left:0;top:125px;width:205px;height:2.5px;background:#3c3c3c;"></div>
<div class="a" style="left:0;top:127.5px;width:205px;height:19.5px;background:#434343;border-top:1px solid #3a3a3a;"></div><div class="a" style="left:0;top:127.5px;width:27.5px;height:20.5px;background:#535353;"></div><div class="t" style="left:6.25px;top:131.9px;font-size:8.3px;color:#ffffff;font-weight:bold;letter-spacing:-0.2px">属性</div><div class="a" style="left:27.0px;top:127.5px;width:1px;height:19.5px;background:#3b3b3b;"></div><div class="t" style="left:34.0px;top:131.9px;font-size:8.3px;color:#c4c4c4;letter-spacing:-0.3px">调整</div><div class="a" style="left:55.25px;top:127.5px;width:1px;height:19.5px;background:#3b3b3b;"></div><div class="t" style="left:62.25px;top:131.9px;font-size:8.3px;color:#c4c4c4;letter-spacing:-0.3px">库</div><div class="a" style="left:81.25px;top:127.5px;width:1px;height:19.5px;background:#3b3b3b;"></div><div class="a" style="left:191.55px;top:135.2px;width:6.8px;height:1px;background:#cdcdcd;"></div><div class="a" style="left:191.55px;top:137.1px;width:6.8px;height:1px;background:#cdcdcd;"></div><div class="a" style="left:191.55px;top:139.0px;width:6.8px;height:1px;background:#cdcdcd;"></div>
<div class="a" style="left:8.25px;top:152px;width:15px;height:15px;background:#3a3a3a;border-radius:1px;"></div>
<svg style="left:11.75px;top:155px" width="8" height="9.5" viewBox="0 0 8 9.5"><path d="M0.6 0.6 H5 L7.4 3 V8.9 H0.6 Z" fill="none" stroke="#f0f0f0" stroke-width="1"/><path d="M4.8 0.6 V3.2 H7.4" fill="none" stroke="#f0f0f0" stroke-width="0.8"/></svg>
<div class="t" style="left:28.25px;top:156px;font-size:8.5px;color:#e8e8e8;letter-spacing:-0.2px">文档</div>
<div class="a" style="left:0;top:171.5px;width:205px;height:1px;background:#444;"></div>
<svg style="left:5.15px;top:181.3px" width="6" height="3.6" viewBox="0 0 6 4"><path d="M0.3 0.5 L3 3.2 L5.7 0.5" stroke="#c8c8c8" stroke-width="1" fill="none"/></svg>
<div class="t" style="left:16.25px;top:179px;font-size:8.8px;font-weight:bold;color:#ffffff;letter-spacing:-0.2px">画布</div>
<div class="t" style="left:36.85px;top:201.2px;font-size:7.5px;color:#d6d6d6;">W</div>
<div class="a" style="left:48.75px;top:197px;width:40px;height:14.75px;background:#454545;border:1px solid #646464;"></div>
<div class="t" style="left:50.95px;top:200.2px;font-size:8.3px;color:#f0f0f0;letter-spacing:-0.35px">1890 像素</div>
<div class="t" style="left:98.25px;top:201.2px;font-size:7.5px;color:#d6d6d6;">X</div>
<div class="a" style="left:108.75px;top:197px;width:40px;height:14.75px;background:#4f4f4f;border:1px solid #5f5f5f;"></div>
<div class="t" style="left:111.25px;top:200.2px;font-size:8.3px;color:#7c7c7c;letter-spacing:-0.35px">0 像素</div>
<div class="t" style="left:39.25px;top:221.7px;font-size:7.5px;color:#d6d6d6;">H</div>
<div class="a" style="left:48.75px;top:217.5px;width:40px;height:14.75px;background:#454545;border:1px solid #646464;"></div>
<div class="t" style="left:50.95px;top:220.7px;font-size:8.3px;color:#f0f0f0;letter-spacing:-0.35px">1417 像素</div>
<div class="t" style="left:98.25px;top:221.7px;font-size:7.5px;color:#d6d6d6;">Y</div>
<div class="a" style="left:108.75px;top:217.5px;width:40px;height:14.75px;background:#4f4f4f;border:1px solid #5f5f5f;"></div>
<div class="t" style="left:111.25px;top:220.7px;font-size:8.3px;color:#7c7c7c;letter-spacing:-0.35px">0 像素</div>
<svg style="left:13.25px;top:210px" width="6" height="10" viewBox="0 0 6 10"><rect x="0.8" y="0.6" width="4.4" height="4.6" rx="2.2" fill="none" stroke="#dcdcdc" stroke-width="1.1"/><rect x="0.8" y="4.8" width="4.4" height="4.6" rx="2.2" fill="none" stroke="#dcdcdc" stroke-width="1.1"/><path d="M3 3 V7" stroke="#dcdcdc" stroke-width="1"/></svg>
<div class="a" style="left:51.25px;top:243px;width:11.2px;height:12px;background:#d2d2d2;border-radius:1px;"></div>
<svg style="left:53.25px;top:245px" width="7.2" height="9" viewBox="0 0 7.2 9"><circle cx="3.6" cy="2" r="1.6" fill="#444"/><path d="M0.6 9 C0.6 5.6 1.8 4.4 3.6 4.4 C5.4 4.4 6.6 5.6 6.6 9 Z" fill="#444"/></svg>
<div class="a" style="left:67.5px;top:240.5px;width:16px;height:16.5px;background:#303030;"></div>
<div class="a" style="left:69.5px;top:245px;width:12px;height:8.8px;border:1px solid #f0f0f0;"></div>
<svg style="left:72.45px;top:247px" width="6" height="6" viewBox="0 0 6 6"><circle cx="3" cy="1.4" r="1.3" fill="#f0f0f0"/><path d="M0.4 6 C0.4 3.8 1.4 3.2 3 3.2 C4.6 3.2 5.6 3.8 5.6 6 Z" fill="#f0f0f0"/></svg>
<div class="t" style="left:49.25px;top:266.3px;font-size:8.5px;color:#dcdcdc;letter-spacing:-0.4px">分辨率 :</div><div class="t" style="left:80.75px;top:267.1px;font-size:7.6px;color:#b8c4d8;">300</div><div class="t" style="left:96.25px;top:266.3px;font-size:8.5px;color:#dcdcdc;letter-spacing:-0.4px">像素 /英寸</div>
<div class="t" style="left:27.5px;top:285.3px;font-size:8.3px;color:#dcdcdc;letter-spacing:-0.3px">模式</div>
<div class="a dd" style="left:50.0px;top:282.5px;width:98.75px;height:15px;"></div>
<div class="t" style="left:56.25px;top:286px;font-size:8.3px;color:#f0f0f0;letter-spacing:-0.3px"><span style="font-size:7.3px;color:#e8d8c8">RGB</span> 颜色</div>
<svg style="left:141.25px;top:288.6px" width="5" height="3.2" viewBox="0 0 6 4"><path d="M0.3 0.5 L3 3.2 L5.7 0.5" stroke="#d6d6d6" stroke-width="1" fill="none"/></svg>
<div class="a dd" style="left:50.0px;top:301.25px;width:98.75px;height:15px;"></div>
<div class="t" style="left:56.25px;top:304.8px;font-size:8.3px;color:#f0f0f0;letter-spacing:-0.3px">8 位/通道</div>
<svg style="left:141.25px;top:307.4px" width="5" height="3.2" viewBox="0 0 6 4"><path d="M0.3 0.5 L3 3.2 L5.7 0.5" stroke="#d6d6d6" stroke-width="1" fill="none"/></svg>
<div class="a" style="left:190.75px;top:172.5px;width:13.5px;height:146px;background:#4d4d4d;"></div>
<div class="a" style="left:192.25px;top:184.5px;width:7.75px;height:52px;background:#6b6b6b;"></div>
<svg style="left:193.55px;top:178.6px" width="5.4" height="3.2" viewBox="0 0 6 4"><path d="M0.3 3.5 L3 0.8 L5.7 3.5" stroke="#9a9a9a" stroke-width="1" fill="none"/></svg>
<svg style="left:193.55px;top:309.5px" width="5.4" height="3.2" viewBox="0 0 6 4"><path d="M0.3 0.5 L3 3.2 L5.7 0.5" stroke="#9a9a9a" stroke-width="1" fill="none"/></svg>
<div class="a" style="left:0;top:336.5px;width:205px;height:2.3px;background:#3c3c3c;"></div>
<div class="a" style="left:0;top:338.75px;width:205px;height:19.5px;background:#434343;border-top:1px solid #3a3a3a;"></div><div class="a" style="left:0;top:338.75px;width:27.5px;height:20.5px;background:#535353;"></div><div class="t" style="left:6.25px;top:343.1px;font-size:8.3px;color:#ffffff;font-weight:bold;letter-spacing:-0.2px">图层</div><div class="a" style="left:27.0px;top:338.75px;width:1px;height:19.5px;background:#3b3b3b;"></div><div class="t" style="left:34.0px;top:343.1px;font-size:8.3px;color:#c4c4c4;letter-spacing:-0.3px">通道</div><div class="a" style="left:55.25px;top:338.75px;width:1px;height:19.5px;background:#3b3b3b;"></div><div class="t" style="left:62.25px;top:343.1px;font-size:8.3px;color:#c4c4c4;letter-spacing:-0.3px">路径</div><div class="a" style="left:83.75px;top:338.75px;width:1px;height:19.5px;background:#3b3b3b;"></div><div class="a" style="left:191.55px;top:346.45px;width:6.8px;height:1px;background:#cdcdcd;"></div><div class="a" style="left:191.55px;top:348.35px;width:6.8px;height:1px;background:#cdcdcd;"></div><div class="a" style="left:191.55px;top:350.25px;width:6.8px;height:1px;background:#cdcdcd;"></div>
<div class="a" style="left:3.25px;top:364.5px;width:60px;height:15px;background:#4e4e4e;border:1px solid #616161;border-radius:2px;"></div>
<svg style="left:8.25px;top:368.3px" width="7.5" height="7.5" viewBox="0 0 7.5 7.5"><circle cx="3" cy="3" r="2.3" fill="none" stroke="#dcdcdc" stroke-width="1.1"/><path d="M4.6 4.6 L7.1 7.1" stroke="#dcdcdc" stroke-width="1.3"/></svg>
<div class="t" style="left:19.25px;top:368px;font-size:8.3px;color:#9c9c9c;letter-spacing:-0.3px">类型</div>
<svg style="left:56.25px;top:371px" width="5" height="3.2" viewBox="0 0 6 4"><path d="M0.3 0.5 L3 3.2 L5.7 0.5" stroke="#777" stroke-width="1" fill="none"/></svg>
<svg style="left:75.0px;top:368.25px" width="9.3" height="7" viewBox="0 0 9.3 7"><rect x="0.5" y="0.5" width="8.3" height="6" fill="none" stroke="#d0d0d0" stroke-width="1"/><path d="M1.4 5.6 L3.4 3 L4.8 4.6 L6 3.6 L7.8 5.6 Z" fill="#d0d0d0"/></svg>
<svg style="left:93.25px;top:367.5px" width="8" height="8" viewBox="0 0 8 8"><circle cx="4" cy="4" r="3.4" fill="none" stroke="#d0d0d0" stroke-width="1"/><path d="M6.4 1.6 A3.4 3.4 0 0 1 1.6 6.4 Z" fill="#d0d0d0"/></svg>
<div class="t" style="left:109.75px;top:367.40px;font-size:10.5px;font-weight:bold;color:#d0d0d0;font-family:'Liberation Serif',serif;">T</div>
<svg style="left:126.75px;top:367.3px" width="9" height="9" viewBox="0 0 9 9"><rect x="1.5" y="1.5" width="6" height="6" fill="none" stroke="#d0d0d0" stroke-width="1"/><rect x="0" y="0" width="2.6" height="2.6" fill="#d0d0d0"/><rect x="6.4" y="0" width="2.6" height="2.6" fill="#d0d0d0"/><rect x="0" y="6.4" width="2.6" height="2.6" fill="#d0d0d0"/><rect x="6.4" y="6.4" width="2.6" height="2.6" fill="#d0d0d0"/></svg>
<svg style="left:144.25px;top:367px" width="9" height="9.5" viewBox="0 0 9 9.5"><path d="M2.6 0.5 H6 L8.4 2.9 V9 H2.6 Z" fill="none" stroke="#d0d0d0" stroke-width="1"/><path d="M5.8 0.5 V3.1 H8.4" fill="none" stroke="#d0d0d0" stroke-width="0.8"/><rect x="0.4" y="5" width="4" height="4" fill="#d0d0d0"/></svg>
<div class="a" style="left:163.25px;top:365.75px;width:6.75px;height:12.5px;border-radius:3.4px;background:#474747;"></div>
<div class="a" style="left:163.55px;top:366px;width:6.2px;height:6.2px;border-radius:50%;background:#8c8c8c;"></div>
<div class="a" style="left:0;top:382px;width:205px;height:1px;background:#484848;"></div>
<div class="a" style="left:3.25px;top:385.75px;width:82.25px;height:15px;background:#4e4e4e;border:1px solid #616161;border-radius:2px;"></div>
<div class="t" style="left:9.25px;top:389.2px;font-size:8.3px;color:#a8a8a8;letter-spacing:-0.3px">正常</div>
<svg style="left:78.25px;top:392px" width="5" height="3.2" viewBox="0 0 6 4"><path d="M0.3 0.5 L3 3.2 L5.7 0.5" stroke="#777" stroke-width="1" fill="none"/></svg>
<div class="t" style="left:92.0px;top:389px;font-size:8.5px;color:#ababab;letter-spacing:-0.3px">不透明度:</div>
<div class="a" style="left:131.25px;top:386.5px;width:25.5px;height:12px;background:#494949;border:1px solid #5a5a5a;"></div>
<div class="t" style="left:133.75px;top:389.2px;font-size:7.6px;color:#858585;letter-spacing:-0.3px">100%</div>
<div class="a" style="left:159.25px;top:386.5px;width:10px;height:12px;background:#4e4e4e;border:1px solid #5c5c5c;"></div>
<svg style="left:161.75px;top:391.2px" width="5" height="3.2" viewBox="0 0 6 4"><path d="M0.3 0.5 L3 3.2 L5.7 0.5" stroke="#777" stroke-width="1" fill="none"/></svg>
<div class="a" style="left:0;top:403.25px;width:205px;height:1px;background:#484848;"></div>
<div class="t" style="left:5.0px;top:409.7px;font-size:8.5px;color:#b4b4b4;letter-spacing:-0.3px">锁定:</div>
<svg style="left:31.25px;top:409px" width="8" height="8" viewBox="0 0 8 8"><rect x="0.4" y="0.4" width="7.2" height="7.2" fill="none" stroke="#d0d0d0" stroke-width="0.8"/><rect x="0.4" y="0.4" width="2.4" height="2.4" fill="#d0d0d0"/><rect x="5.2" y="0.4" width="2.4" height="2.4" fill="#d0d0d0"/><rect x="2.8" y="2.8" width="2.4" height="2.4" fill="#d0d0d0"/><rect x="0.4" y="5.2" width="2.4" height="2.4" fill="#d0d0d0"/><rect x="5.2" y="5.2" width="2.4" height="2.4" fill="#d0d0d0"/></svg>
<svg style="left:46.25px;top:408.5px" width="9.5" height="9.5" viewBox="0 0 14 14"><path d="M12 0.6 L13.2 1.8 L7.2 8.6 L5.4 7 Z" fill="#d0d0d0"/><path d="M4.8 7.6 L6.6 9.2 C6.4 11.6 4 13.2 0.8 12.8 C2.2 11.8 2 9.2 4.8 7.6 Z" fill="#d0d0d0"/></svg>
<svg style="left:61.75px;top:409px" width="9" height="9" viewBox="0 0 14 14"><path d="M7 0.5 L9.2 3 H7.6 V6.4 H11 V4.8 L13.5 7 L11 9.2 V7.6 H7.6 V11 H9.2 L7 13.5 L4.8 11 H6.4 V7.6 H3 V9.2 L0.5 7 L3 4.8 V6.4 H6.4 V3 H4.8 Z" fill="#d0d0d0"/></svg>
<svg style="left:77.5px;top:409px" width="9.3" height="9" viewBox="0 0 9.3 9"><path d="M2.2 0 V7 H9.3 M0 2.2 H7 V9" fill="none" stroke="#d0d0d0" stroke-width="1"/><path d="M2.2 2.2 L7 7" stroke="#d0d0d0" stroke-width="0.6"/></svg>
<svg style="left:94.25px;top:408.8px" width="7" height="9" viewBox="0 0 7 9"><rect x="0" y="3.8" width="7" height="5.2" rx="0.6" fill="#d0d0d0"/><path d="M1.6 4 V2.6 C1.6 0.4 5.4 0.4 5.4 2.6 V4" fill="none" stroke="#d0d0d0" stroke-width="1.1"/></svg>
<div class="t" style="left:109.25px;top:409.7px;font-size:8.5px;color:#b4b4b4;letter-spacing:-0.3px">填充:</div>
<div class="a" style="left:131.25px;top:407.2px;width:25.5px;height:12px;background:#494949;border:1px solid #5a5a5a;"></div>
<div class="t" style="left:133.75px;top:409.9px;font-size:7.6px;color:#858585;letter-spacing:-0.3px">100%</div>
<div class="a" style="left:159.25px;top:407.2px;width:10px;height:12px;background:#4e4e4e;border:1px solid #5c5c5c;"></div>
<svg style="left:161.75px;top:411.9px" width="5" height="3.2" viewBox="0 0 6 4"><path d="M0.3 0.5 L3 3.2 L5.7 0.5" stroke="#777" stroke-width="1" fill="none"/></svg>
<div class="a" style="left:0;top:447.5px;width:190.0px;height:70px;background:#4b4b4b;"></div><div class="a" style="left:190.0px;top:425px;width:12px;height:90px;background:#505050;"></div>
<div class="a" style="left:21.25px;top:425px;width:168.75px;height:22.5px;background:#6b6b6b;"></div>

<svg style="left:6.25px;top:434.3px" width="9.5" height="6.6" viewBox="0 0 9.5 6.6"><path d="M0 3.3 C2 -0.6 7.5 -0.6 9.5 3.3 C7.5 7.2 2 7.2 0 3.3 Z" fill="#f4f4f4"/><circle cx="4.75" cy="3.3" r="1.9" fill="#535353"/><circle cx="4.75" cy="3.3" r="0.9" fill="#f4f4f4"/></svg>
<div class="a" style="left:25.0px;top:428.25px;width:22px;height:16.75px;background:#ffffff;border:1px solid #3a3a3a;"></div>
<div class="t" style="left:54.25px;top:432.8px;font-size:8.3px;color:#ffffff;letter-spacing:-0.3px">背景</div>
<svg style="left:171.25px;top:432.5px" width="8.3" height="9" viewBox="0 0 8.3 9"><rect x="0.6" y="3.8" width="7.1" height="4.6" fill="none" stroke="#ececec" stroke-width="1.1"/><path d="M2.2 3.8 V2.6 C2.2 0.4 6.1 0.4 6.1 2.6 V3.8" fill="none" stroke="#ececec" stroke-width="1.1"/><rect x="3.6" y="5.2" width="1.2" height="1.8" fill="#ececec"/></svg>
</div>
<!-- ALPACA PANEL -->
<div id="rgap" class="a"></div>
<div id="alpaca" class="a">
<div class="a" style="left:0;top:0;width:221.05px;height:9.7px;background:#424242;border-radius:3px 3px 0 0;border-bottom:1px solid #393939;"></div>
<svg style="left:199px;top:3.5px" width="6" height="4" viewBox="0 0 6 4"><path d="M2.2 0.3 L0.5 2 L2.2 3.7 M5 0.3 L3.3 2 L5 3.7" stroke="#d8d8d8" stroke-width="0.9" fill="none"/></svg>
<svg style="left:212px;top:3px" width="5.5" height="5" viewBox="0 0 5.5 5"><path d="M0.5 0.4 L5 4.6 M5 0.4 L0.5 4.6" stroke="#e2e2e2" stroke-width="1.4"/></svg>
<div class="a" style="left:0;top:9.7px;width:221.05px;height:19.9px;background:#424242;border-bottom:0.8px solid #3a3a3a;"></div>
<div class="a" style="left:0;top:9.7px;width:36.25px;height:20px;background:#535353;"></div>
<div class="t" style="left:6.7px;top:15.5px;font-size:7.5px;color:#f0f0f0;">Alpaca</div>
<div class="a" style="left:210px;top:17.5px;width:7px;height:1.3px;background:#cfcfcf;"></div>
<div class="a" style="left:210px;top:20.5px;width:7px;height:1.3px;background:#cfcfcf;"></div>
<!-- logo -->
<div class="a" style="left:7px;top:44px;width:32px;height:32px;border-radius:8px;background:#454545;overflow:hidden;">
<svg style="left:0;top:0" width="32" height="32" viewBox="0 0 32 32">
<defs><linearGradient id="lg1" x1="0" y1="0" x2="0" y2="1"><stop offset="0" stop-color="#e8305a"/><stop offset="0.3" stop-color="#d82a78"/><stop offset="0.55" stop-color="#a02a96"/><stop offset="0.74" stop-color="#7a2a98"/><stop offset="0.84" stop-color="#e8622c"/><stop offset="1" stop-color="#f6a21c"/></linearGradient></defs>
<path d="M9.4 10.4 C7.4 7.6 6.8 5 7.4 2.8 C9.6 4.4 11 6.8 11.8 9.2 Z" fill="#6a3cb0" stroke="#e4dcf4" stroke-width="0.7"/>
<path d="M22.6 10.4 C24.6 7.6 25.2 5 24.6 2.8 C22.4 4.4 21 6.8 20.2 9.2 Z" fill="#6a3cb0" stroke="#e4dcf4" stroke-width="0.7"/>
<path d="M9.4 10 C11.4 8 20.6 8 22.6 10 C24 12.4 24 18 23.2 22 L24.2 32 H8.6 L8.8 22 C8 18 8 12.4 9.4 10 Z" fill="url(#lg1)"/>
<ellipse cx="16" cy="19.4" rx="3.4" ry="3" fill="#f4b060"/>
<path d="M15 18.6 H17 L16 19.8 Z" fill="#5a2a50"/>
<path d="M11 16 H13.4 M18.6 16 H21" stroke="#1a1a3a" stroke-width="1"/>
<path d="M11 17 H13 M19 17 H21" stroke="#3a8ab0" stroke-width="0.5"/>
</svg></div>
<div class="t" style="left:45.6px;top:52.40px;font-size:14.2px;font-weight:bold;color:#ffffff;letter-spacing:-0.05px">alpaca</div>
<div class="t" style="left:46.3px;top:69.00px;font-size:6.2px;color:#9c9c9c;">v2.9.3</div>
<div class="t" style="left:6.2px;top:92.1px;font-size:9.3px;color:#f2f2f2;">登录</div>
<div class="t" style="left:32px;top:92.1px;font-size:9px;color:#9ea3ab;">帮助</div>
<div class="a" style="left:6px;top:105.5px;width:208px;height:1px;background:#5f5f5f;"></div>
<div class="a" style="left:6px;top:105px;width:18.5px;height:1.8px;background:#c83272;"></div>
<!-- hero -->
<div class="a" style="left:69.65px;top:124.70px;width:81.6px;height:82.2px;border-radius:50%;background:#ffffff;"></div>
<svg id="hero" style="left:69.25px;top:118.70px" width="110" height="90" viewBox="0 0 110 90">
<defs>
<linearGradient id="hh" x1="0" y1="0" x2="0" y2="1"><stop offset="0" stop-color="#d8306a"/><stop offset="0.45" stop-color="#d62a78"/><stop offset="0.75" stop-color="#9a2a92"/><stop offset="1" stop-color="#7a2a98"/></linearGradient>
<linearGradient id="hn" x1="0" y1="0" x2="0" y2="1"><stop offset="0" stop-color="#8a2a96"/><stop offset="0.3" stop-color="#c4488a"/><stop offset="0.55" stop-color="#f09a3a"/><stop offset="1" stop-color="#f4b06a"/></linearGradient>
</defs>
<!-- grass -->
<path d="M20 75.6 C26 73.4 34 72.6 40 73.2 C46 72.8 52 73.6 57 75.4 C50 76.6 28 76.8 20 75.6 Z" fill="#5f9e3c"/>
<!-- far legs -->
<path d="M30 52 L30.5 66 H34.5 L36 52 Z" fill="#b07088"/>
<path d="M50.5 54 L50.5 68 H54.5 L56 52 Z" fill="#a878b0"/>
<!-- body -->
<path d="M20.5 44 C21 38 27 34.6 34 35 C40 35.4 46 37 51 34 C55 31 59 32 61 35 C63 40 62.4 47 61.6 52 C60.6 56 58 57 55 57.4 C50 58 45 56 40 56.6 C34 57.4 28 58 24 56 C20.6 54 20 48 20.5 44 Z" fill="#e6d4ce"/>
<path d="M54 37 C57 42 58.6 50 57.4 57 C55.6 57.6 53.4 57.6 51.4 57 C52.6 51 52 44 50 40 Z" fill="#a266b4" opacity="0.75"/>
<path d="M57.4 40 C60.4 42 62.4 47 61.6 52 C60.8 55.4 59 57 57.2 57.2 C58.4 51 58.4 45 57.4 40 Z" fill="#efe2de"/>
<!-- orange mane -->
<path d="M20.4 46 C20 39.4 25 35 31 34.6 C36 33.6 41 34 45 36 C41 38.6 36 38.4 32 40 C27 41.6 24 44 22.6 48.6 C22 53 23 57 24.4 60 C22 58.6 20.6 52 20.4 46 Z" fill="#f2a040"/>
<path d="M23 37.4 L27 35 L31.6 35.6 L27 38.6 Z" fill="#f6b868"/>
<path d="M20.6 50 C21.4 55 23 59 25.6 62 L22.6 62.6 C20.8 59 20.2 54 20.6 50 Z" fill="#f09a34"/>
<!-- neck -->
<path d="M50.4 24 C50.2 29 50 33 49.6 37 C53 40 58 40.6 61.6 37 C62.4 33 62.6 28 62.6 24 Z" fill="url(#hn)"/>
<path d="M57 29 C60 30 62 33 62 37 C61 39.4 59 40.4 57 40.4 C58 36 58 32 57 29 Z" fill="#efe0dc"/>
<!-- saddle -->
<path d="M44.7 36 L51.6 33.2 L56 36.9 L50 41.2 Z" fill="#e2289e"/>
<path d="M43.2 36.8 L45.2 35.4 L45.8 37.4 Z" fill="#2a9aa6"/>
<!-- ears -->
<path d="M51.6 12.6 C50.4 9.6 50.2 7 51.1 4.8 C52.6 6.8 53.6 9.4 54 12 Z" fill="#3c2c8c"/>
<path d="M62.4 13.2 C63.8 10.6 64.6 8.6 64.4 6.6 C62.8 8 61.4 10 60.4 12.2 Z" fill="#3c2c8c"/>
<path d="M51.6 11.6 C51.2 9.6 51.2 8 51.5 6.8" stroke="#b8a8e8" stroke-width="0.5" fill="none"/>
<!-- head -->
<path d="M50.9 13 C53 10.6 61.4 10.6 63.4 13 C64.2 17 63.8 22 62.4 25.6 C59.4 27 54.4 27 51.6 25.6 C50.2 22 50 17 50.9 13 Z" fill="url(#hh)"/>
<ellipse cx="56.9" cy="20.3" rx="3.2" ry="2.9" fill="#ecc246"/>
<path d="M55.7 19.4 H58.1 L56.9 20.8 Z" fill="#4a2040"/><path d="M55.9 21.8 H57.9" stroke="#4a2040" stroke-width="0.5"/>
<ellipse cx="53" cy="16.3" rx="1.3" ry="0.9" fill="#2aa6b6"/><ellipse cx="61" cy="16.3" rx="1.3" ry="0.9" fill="#2aa6b6"/>
<circle cx="53.2" cy="16.4" r="0.5" fill="#1a1a3a"/><circle cx="60.8" cy="16.4" r="0.5" fill="#1a1a3a"/>
<!-- near legs -->
<path d="M22.6 54 L23 66 H27 L28.4 54 Z" fill="#9a5878"/>
<path d="M41.8 55 L42.6 68 H46.4 L47.4 55 Z" fill="#e8d4ce"/>
<!-- fluffy ankles -->
<ellipse cx="24.2" cy="66.4" rx="3.6" ry="3" fill="#e23a96"/>
<ellipse cx="32.3" cy="66.6" rx="3.2" ry="2.9" fill="#e64aa0"/>
<ellipse cx="44.8" cy="69.2" rx="3.4" ry="2.8" fill="#e64aa0"/>
<ellipse cx="52.7" cy="68.8" rx="3.3" ry="2.5" fill="#e23a96"/>
<!-- hooves -->
<path d="M23 69 H26 V74.4 H23 Z M31 69 H33.8 V73.6 H31 Z M43.8 71.6 H46.2 V75 H43.8 Z M51.6 71 H54 V74.6 H51.6 Z" fill="#6a2a4c"/>
<!-- splashes -->
<path d="M73.9 47.4 L86.7 44.2 L83.4 46.8 L78 47.2 Z" fill="#f2a040"/>
<path d="M85.3 63.8 L92 53.8 L96.7 52 L96.5 59.4 Z" fill="#f2a898"/>
<circle cx="69.6" cy="51.4" r="0.7" fill="#f2a040"/><circle cx="65.3" cy="57.4" r="0.6" fill="#e05aa0"/><circle cx="60.1" cy="64.8" r="0.7" fill="#e05aa0"/>
<circle cx="73.9" cy="63.4" r="0.6" fill="#f2a040"/><circle cx="78.1" cy="68.6" r="0.6" fill="#d8a0b0"/><circle cx="98.7" cy="67.7" r="0.8" fill="#c87aa0"/><circle cx="103.9" cy="64.3" r="0.9" fill="#8a2a4a"/>
<circle cx="67" cy="75.4" r="0.6" fill="#f0c8b8"/><circle cx="13.9" cy="72" r="0.6" fill="#f2a040"/><circle cx="18.1" cy="68.6" r="0.5" fill="#f2a040"/>
</svg>
<div class="t" style="left:30px;top:221.60px;width:161px;text-align:center;font-size:17.4px;line-height:20.4px;color:#f4f4f4;white-space:normal;-webkit-text-stroke:0.25px #f4f4f4;">Welcome<br>to Alpaca!</div>
<!-- form -->
<div class="t" style="left:28.6px;top:280.3px;font-size:8.6px;color:#b6b6b6;">邮箱</div>
<div class="a" style="left:29px;top:294px;width:162px;height:21px;background:#232323;border-radius:2.5px;"></div>
<div class="t" style="left:41.25px;top:300.60px;font-size:8.5px;color:#dadada;width:110.0px;height:10px;overflow:hidden;">52<span style="letter-spacing:0.35px">*****</span><span style="position:absolute;left:34px;top:0">iningxia@proton.me</span></div>
<div class="a" style="left:50.75px;top:300.00px;width:24px;height:10px;background:#505050;border-radius:3px;filter:blur(0.9px);"></div>
<div class="t" style="left:28.6px;top:329px;font-size:8.6px;color:#b6b6b6;">密码</div>
<div class="a" style="left:28.7px;top:342.2px;width:163.3px;height:22.2px;background:#232323;border:1px solid #2f6fd6;border-radius:3px;"></div>
<div class="t" style="left:43.4px;top:347.2px;font-size:12.6px;color:#e6e6e6;">**********</div>
<div class="a" style="left:40.25px;top:298.70px;width:111.2px;height:58.2px;border:2px solid #e63a3a;"></div>
<div class="t" style="left:30px;top:375.6px;width:161px;text-align:center;font-size:8.6px;color:#c4c4c4;">忘记密码?</div>
<div class="a" style="left:28.95px;top:396.50px;width:163.3px;height:25.9px;background:#cf3070;border-radius:3.5px;"></div>
<div class="t" style="left:30px;top:405.5px;width:161px;text-align:center;font-size:9px;color:#ffffff;">登录</div>
<div class="a" style="left:90.15px;top:398.00px;width:38.9px;height:24.9px;border:2px solid #f03c3c;"></div>
<div class="a" style="left:28.95px;top:433.70px;width:163.3px;height:26px;background:#ffffff;border-radius:3.5px;"></div>
<div class="t" style="left:30px;top:442.5px;width:161px;text-align:center;font-size:9px;color:#111111;">注册</div>
</div>
</div>
</body>
</html>
